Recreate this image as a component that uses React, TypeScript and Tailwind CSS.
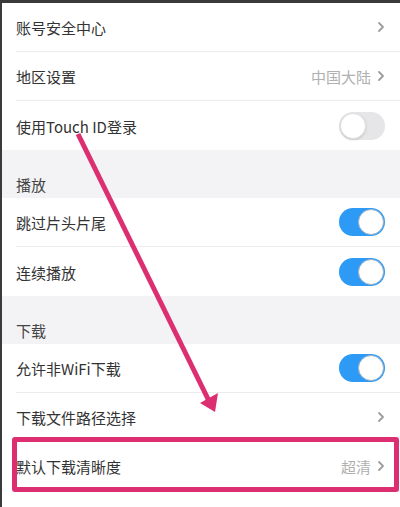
import React from 'react'

const font = { fontFamily: '"Noto Sans CJK SC", "Noto Sans", sans-serif' }

function Chevron() {
  return (
    <svg width="8" height="12" viewBox="0 0 8 12" className="ml-[6px]">
      <path d="M2 2 L6 6 L2 10" fill="none" stroke="#9d9d9d" strokeWidth="1.8" strokeLinecap="round" strokeLinejoin="round" />
    </svg>
  )
}

function Toggle({ on }: { on: boolean }) {
  return (
    <div
      className={
        on
          ? 'flex h-[28px] w-[46px] items-center justify-end rounded-full bg-[#2d9af6] pr-[1px]'
          : 'flex h-[28px] w-[46px] items-center justify-start rounded-full bg-[#e6e6e8] pl-[1px]'
      }
    >
      <div
        className={
          on
            ? 'h-[26px] w-[26px] rounded-full border border-[#9fb3c4] bg-white'
            : 'h-[26px] w-[26px] rounded-full border border-[#e0e0e0] bg-white shadow-sm'
        }
      />
    </div>
  )
}

type Row = { label: string; value?: string; arrow?: boolean; toggle?: boolean }

function SettingRow({ row, last }: { row: Row; last?: boolean }) {
  return (
    <div className="bg-white pl-4">
      <div
        className={
          last
            ? 'flex h-[49px] items-center pr-[15px]'
            : 'flex h-[49px] items-center border-b border-[#ececee] pr-[15px]'
        }
      >
        <span className="flex-1 pt-[3px] text-[15px] text-[#333333]">{row.label}</span>
        {row.value && <span className="pt-[3px] text-[15px] text-[#b0b0b0]">{row.value}</span>}
        {row.arrow && <Chevron />}
        {row.toggle === true && <Toggle on />}
        {row.toggle === false && <Toggle on={false} />}
      </div>
    </div>
  )
}

function SectionHeader({ title }: { title: string }) {
  return (
    <div className="flex h-[48px] items-end bg-[#f3f3f5] pb-[2px] pl-4">
      <span className="text-[15px] text-[#444444]">{title}</span>
    </div>
  )
}

export default function App() {
  return (
    <div className="relative h-[507px] w-[400px] overflow-hidden border-l-2 border-t-[3px] border-[#3a3a3a] bg-white" style={font}>
      <div className="-ml-[2px]">
        <SettingRow row={{ label: '账号安全中心', arrow: true }} />
        <SettingRow row={{ label: '地区设置', value: '中国大陆', arrow: true }} />
        <SettingRow row={{ label: '使用Touch ID登录', toggle: false }} last />
        <SectionHeader title="播放" />
        <SettingRow row={{ label: '跳过片头片尾', toggle: true }} />
        <SettingRow row={{ label: '连续播放', toggle: true }} last />
        <SectionHeader title="下载" />
        <SettingRow row={{ label: '允许非WiFi下载', toggle: true }} />
        <SettingRow row={{ label: '下载文件路径选择', arrow: true }} />
        <SettingRow row={{ label: '默认下载清晰度', value: '超清', arrow: true }} />
        <SettingRow row={{ label: '' }} last />
      </div>

      {/* annotation: highlight box */}
      <div className="absolute left-[10px] top-[434px] h-[55px] w-[387px] rounded-[3px] border-[5px] border-[#dc2f72]" />

      {/* annotation: arrow */}
      <svg className="absolute left-0 top-0" width="400" height="507" viewBox="0 0 400 507">
        <line x1="76" y1="131" x2="207" y2="398" stroke="#dc2f72" strokeWidth="5" />
        <polygon points="213,409 198,400 216,390" fill="#dc2f72" />
      </svg>
    </div>
  )
}
